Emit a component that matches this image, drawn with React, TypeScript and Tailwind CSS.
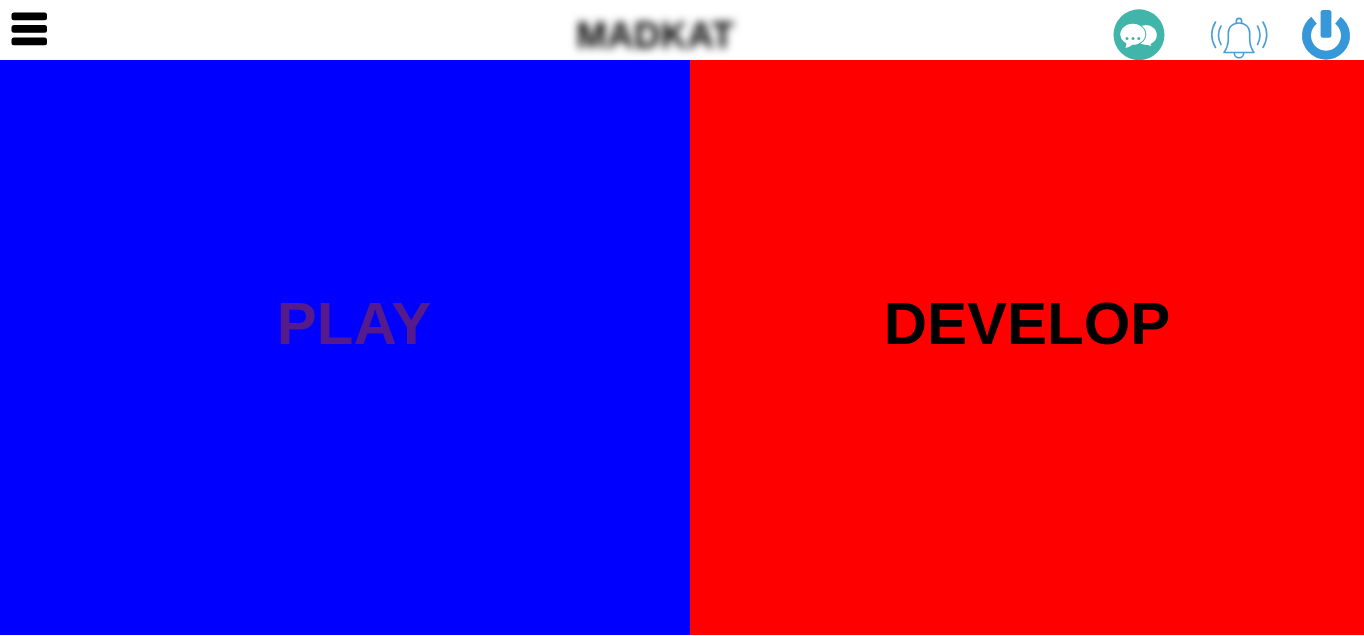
import React from 'react';

function MenuIcon() {
  return (
    <svg viewBox="0 0 38 36" className="h-9 w-[38px]" aria-hidden="true">
      <g fill="#000">
        <rect x="1.5" y="2.5" width="35.5" height="7.7" rx="2.5" />
        <rect x="1.5" y="15" width="35.5" height="7.7" rx="2.5" />
        <rect x="1.5" y="27.5" width="35.5" height="7.7" rx="2.5" />
      </g>
    </svg>
  );
}

function ChatIcon() {
  return (
    <svg viewBox="0 0 52 52" className="size-[52px]" aria-hidden="true">
      <circle cx="26" cy="26.7" r="25.5" fill="#41b5aa" />
      <ellipse cx="33" cy="27" rx="10.8" ry="10" fill="#fff" />
      <path d="M33 36c1.500 1 3.500 1.800 5.500 2-1-1.200-1.200-2.200-1-3.500z" fill="#fff" />
      <ellipse cx="20" cy="26.3" rx="13.3" ry="11.2" fill="#41b5aa" />
      <ellipse cx="19.8" cy="26.3" rx="12.5" ry="10.5" fill="#fff" />
      <path d="M13 34c.6 2 .4 4-.8 5.800 3-.3 5.600-1.200 7.300-3.300z" fill="#fff" />
      <g fill="#41b5aa">
        <circle cx="14" cy="30.6" r="1.5" />
        <circle cx="20" cy="30.6" r="1.5" />
        <circle cx="25.8" cy="30.6" r="1.5" />
      </g>
    </svg>
  );
}

function BellIcon() {
  return (
    <svg viewBox="0 0 60 46" className="h-[46px] w-[60px]" aria-hidden="true">
      <g fill="none" stroke="#4a9fd8" strokeWidth="1.6" strokeLinecap="round" strokeLinejoin="round">
        <path d="M15 38.500h30c-2.700-3.500-4.300-8-4.300-14v-5.500c0-6-4.600-10-10.700-10S19.300 13 19.300 19v5.500c0 6-1.600 10.500-4.300 14z" />
        <path d="M27.400 9V7a2.600 2.600 0 0 1 5.200 0v2" />
        <path d="M25.300 38.700c0 3 2 5 4.700 5s4.700-2 4.700-5" />
        <path d="M12 12c-3.300 6-3.300 12.500 0 18.500M6.500 8c-4.700 8-4.700 17.500 0 25.500" />
        <path d="M48.500 12c3.300 6 3.300 12.500 0 18.500M54 8c4.700 8 4.700 17.500 0 25.500" />
      </g>
    </svg>
  );
}

function PowerIcon() {
  return (
    <svg viewBox="0 0 50 52" className="h-[52px] w-[50px]" aria-hidden="true">
      <path d="M13.100 12.200A19.500 19.500 0 1 0 36.900 12.200" fill="none" stroke="#3798d9" strokeWidth="9" />
      <rect x="19.6" y="2" width="10.8" height="27.8" rx="2.5" fill="#3798d9" />
    </svg>
  );
}

export default function App() {
  return (
    <div className="flex min-h-screen flex-col bg-white pb-px font-['Liberation_Sans',Arial,sans-serif] font-bold">
      <header className="grid h-[60px] grid-cols-[1fr_auto_1fr] overflow-hidden">
        <div className="flex items-start pt-2.5 pl-2.5">
          <button type="button" aria-label="Menu">
            <MenuIcon />
          </button>
        </div>
        <h1 className="pt-4 pr-[54px] text-[37px] leading-10 text-transparent [text-shadow:0_0_8px_#000]">MADKAT</h1>
        <div className="flex items-end justify-end pr-[13px]">
          <button type="button" aria-label="Messages" className="mr-11">
            <ChatIcon />
          </button>
          <button type="button" aria-label="Notifications" className="mr-8">
            <BellIcon />
          </button>
          <button type="button" aria-label="Log out">
            <PowerIcon />
          </button>
        </div>
      </header>
      <main className="grid grow grid-cols-[690fr_674fr] text-[60px] leading-[70px]">
        <a href="#play" className="flex items-center justify-center bg-[#0000ff] pb-12 pl-[18px] text-[#551a8b]">
          PLAY
        </a>
        <a href="#develop" className="flex items-center justify-center bg-[#ff0000] pb-12 text-black">
          DEVELOP
        </a>
      </main>
    </div>
  );
}
